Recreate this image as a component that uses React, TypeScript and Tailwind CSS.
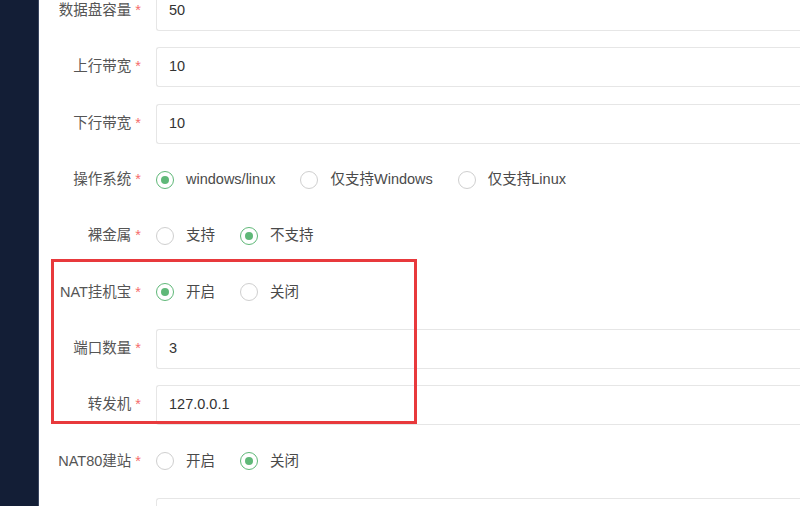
import React from 'react';

type Field =
  | { label: string; kind: 'input'; value: string }
  | { label: string; kind: 'radio'; options: string[]; checked: number };

const Radio: React.FC<{ label: string; checked: boolean }> = ({ label, checked }) => (
  <label className="flex items-center mr-[25px]">
    <span
      className={
        checked
          ? 'w-[18px] h-[18px] rounded-full border-[1.5px] border-[#5fb878] flex items-center justify-center mr-[12px]'
          : 'w-[18px] h-[18px] rounded-full border-[1.5px] border-[#cfcfcf] mr-[12px]'
      }
    >
      {checked && <span className="w-[8px] h-[8px] rounded-full bg-[#5fb878]" />}
    </span>
    <span className="text-[#4a4a4a]">{label}</span>
  </label>
);

const Row: React.FC<{ field: Field }> = ({ field }) => (
  <div className="flex items-center h-[40px]">
    <div className="w-[117px] shrink-0 text-right pr-[15px] text-[#555]">
      {field.label}
      {field.label && <span className="text-[#f56c6c] ml-[4px]">*</span>}
    </div>
    {field.kind === 'input' ? (
      <div className="flex-1 h-[40px] border border-[#e6e6e6] border-r-0 rounded-l-[3px] flex items-center pl-[12px] text-[#333] -mr-[10px]">
        {field.value}
      </div>
    ) : (
      <div className="flex items-center">
        {field.options.map((o, i) => (
          <Radio key={o} label={o} checked={i === field.checked} />
        ))}
      </div>
    )}
  </div>
);

export default function App() {
  const top: Field[] = [
    { label: '数据盘容量', kind: 'input', value: '50' },
    { label: '上行带宽', kind: 'input', value: '10' },
    { label: '下行带宽', kind: 'input', value: '10' },
    { label: '操作系统', kind: 'radio', options: ['windows/linux', '仅支持Windows', '仅支持Linux'], checked: 0 },
    { label: '裸金属', kind: 'radio', options: ['支持', '不支持'], checked: 1 },
  ];
  const boxed: Field[] = [
    { label: 'NAT挂机宝', kind: 'radio', options: ['开启', '关闭'], checked: 0 },
    { label: '端口数量', kind: 'input', value: '3' },
    { label: '转发机', kind: 'input', value: '127.0.0.1' },
  ];
  const bottom: Field[] = [
    { label: 'NAT80建站', kind: 'radio', options: ['开启', '关闭'], checked: 1 },
    { label: '', kind: 'input', value: '' },
  ];

  return (
    <div
      className="w-[800px] h-[506px] overflow-hidden flex bg-white text-[14.5px]"
      style={{ fontFamily: '"Liberation Sans", "Noto Sans CJK SC", sans-serif' }}
    >
      <aside className="w-[39px] shrink-0 bg-[#131e36] border-r border-[#3a4660]" />
      <main className="flex-1 overflow-hidden">
        <div className="-mt-[9px] flex flex-col gap-[16.3px]">
          {top.map((f) => (
            <Row key={f.label} field={f} />
          ))}
          <div className="relative flex flex-col gap-[16.3px]">
            {boxed.map((f) => (
              <Row key={f.label} field={f} />
            ))}
            {/* red highlight annotation */}
            <div className="absolute left-[12px] -top-[13px] w-[366px] h-[165px] border-[3px] border-[#e8393c] pointer-events-none" />
          </div>
          {bottom.map((f, i) => (
            <Row key={i} field={f} />
          ))}
        </div>
      </main>
    </div>
  );
}
